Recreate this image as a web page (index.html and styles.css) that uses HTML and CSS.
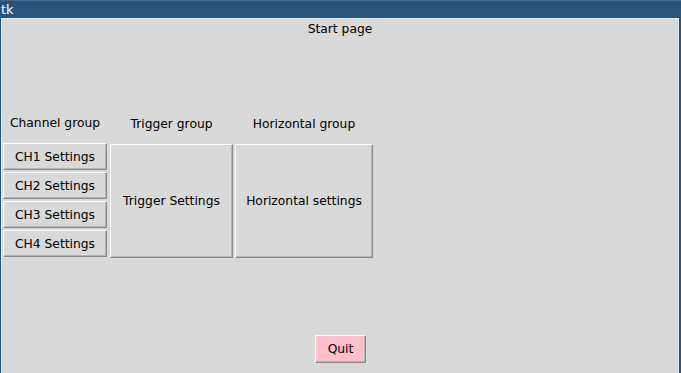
FILE: index.html
```html
<!DOCTYPE html>
<html>
<head>
<meta charset="utf-8">
<link rel="stylesheet" href="styles.css">
</head>
<body>
<div class="titlebar"><span class="title">tk</span></div>
<div class="frame">
  <div class="content">
    <div class="start">Start page</div>
    <div class="groups">
      <div class="col col-ch">
        <div class="glabel glabel-ch">Channel group</div>
        <div class="stack">
          <button class="btn btn-ch">CH1 Settings</button>
          <button class="btn btn-ch">CH2 Settings</button>
          <button class="btn btn-ch">CH3 Settings</button>
          <button class="btn btn-ch">CH4 Settings</button>
        </div>
      </div>
      <div class="col col-trig">
        <div class="glabel">Trigger group</div>
        <button class="btn btn-big btn-trig">Trigger Settings</button>
      </div>
      <div class="col col-hor">
        <div class="glabel">Horizontal group</div>
        <button class="btn btn-big btn-hor">Horizontal settings</button>
      </div>
    </div>
    <div class="spacer"></div>
    <div class="quitrow"><button class="btn btn-quit">Quit</button></div>
  </div>
</div>
</body>
</html>
```

FILE: styles.css
```css
html, body {
  margin: 0;
  padding: 0;
  width: 681px;
  height: 373px;
  overflow: hidden;
  background: #d9d9d9;
  font-family: "DejaVu Sans", sans-serif;
  font-size: 12.3px;
  color: #000;
}
.titlebar {
  height: 17px;
  background: #2a5379;
  border-top: 1px solid #4a6a88;
  display: flex;
  align-items: center;
}
.title {
  color: #ffffff;
  font-family: "DejaVu Sans", sans-serif;
  font-size: 13px;
  padding-left: 1px;
  line-height: 1;
}
.frame {
  height: 355px;
  border-left: 1px solid #2a5379;
  border-right: 2px solid #2a5379;
  box-sizing: border-box;
}
.content {
  height: 100%;
  box-sizing: border-box;
  border-top: 1px solid #e4ebf1;
  border-left: 1px solid #e4ebf1;
  border-right: 1px solid #e9e9e9;
  background: #d9d9d9;
  display: flex;
  flex-direction: column;
}
.start {
  text-align: center;
  height: 20px;
  line-height: 20px;
}
.groups {
  margin-top: 75px;
  display: flex;
  align-items: flex-start;
  padding-left: 1px;
}
.col {
  display: flex;
  flex-direction: column;
  align-items: center;
}
.glabel {
  height: 21px;
  line-height: 21px;
  margin-bottom: 8px;
  text-align: center;
}
.glabel-ch {
  line-height: 19px;
}
.stack {
  display: flex;
  flex-direction: column;
  gap: 2px;
}
.btn {
  font-family: "DejaVu Sans", sans-serif;
  font-size: 12.3px;
  color: #000;
  background: #d9d9d9;
  margin: 0;
  padding: 0;
  box-sizing: border-box;
  border-style: solid;
  border-width: 1px;
  border-color: #ffffff #8a8a8a #8a8a8a #ffffff;
  box-shadow: inset -1px -1px 0 #b5b5b5;
}
.btn-ch {
  width: 104px;
  height: 27px;
}
.col-ch {
  margin-right: 3px;
}
.col-trig {
  margin-right: 2px;
}
.btn-big {
  height: 114px;
  margin-top: 1px;
}
.btn-trig {
  width: 123px;
}
.btn-hor {
  width: 138px;
}
.spacer {
  flex: 1;
}
.quitrow {
  display: flex;
  justify-content: center;
  padding-left: 1px;
  margin-bottom: 10px;
}
.btn-quit {
  width: 51px;
  height: 28px;
  background: #ffc0cb;
}
```
